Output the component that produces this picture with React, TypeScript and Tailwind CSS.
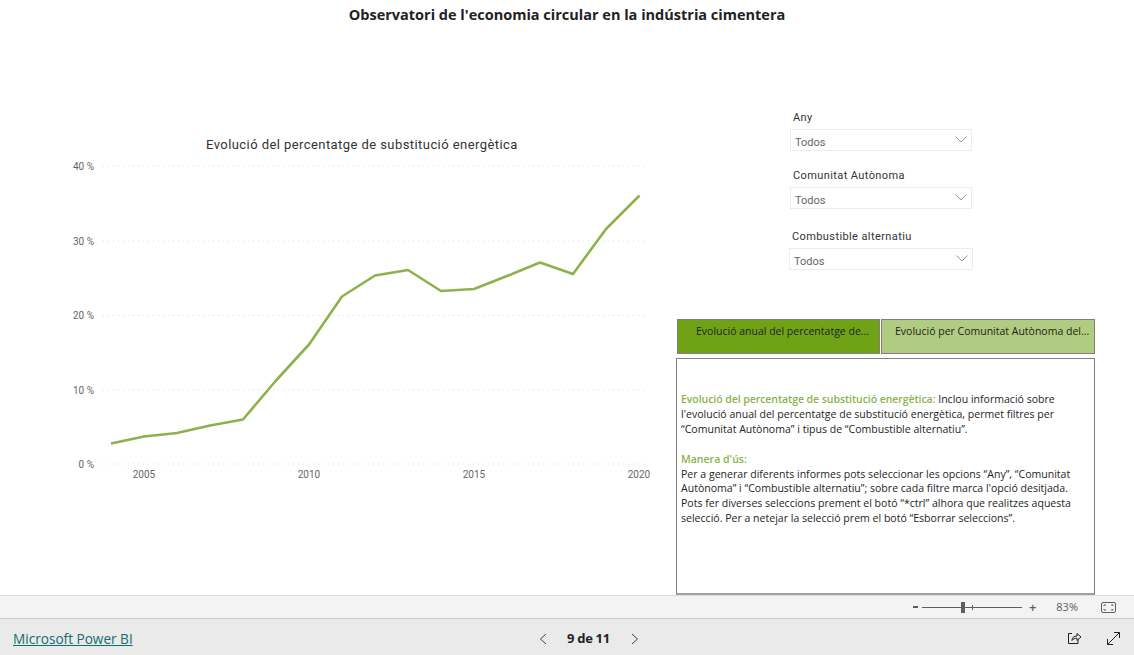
const points = '111,443.5 144,436.5 177,433 210,425.5 243,419.5 276,380.5 309,344.5 342,296.5 375,275.5 408,270 441,291 474,289 507,276 540,262.5 573,274 606,229 639.5,195.5'

function Slicer({ label, labelClass, boxClass }: { label: string; labelClass: string; boxClass: string }) {
  return (
    <div className="flex flex-col">
      <div className={`text-[11px] h-[14px] pt-[1px] leading-[14px] mb-[5px] tracking-[0.4px] text-[#333] font-['Roboto',sans-serif] ${labelClass}`}>{label}</div>
      <div className={`flex items-center justify-between h-[22px] border border-[#ececec] pt-[7px] pl-[4px] pr-[3px] text-[11px] text-[#666] font-['Roboto',sans-serif] ${boxClass}`}>
        <span>Todos</span>
        <svg width="12" height="7" viewBox="0 0 12 7" className="mr-[1px] mb-[9px]">
          <path d="M0.5 0.5 L6 6 L11.5 0.5" fill="none" stroke="#9a9a9a" strokeWidth="1" />
        </svg>
      </div>
    </div>
  )
}

function Chart() {
  const rows = [
    { y: 166, t: '40 %' },
    { y: 241, t: '30 %' },
    { y: 315.5, t: '20 %' },
    { y: 390, t: '10 %' },
    { y: 464, t: '0 %' },
  ]
  const years = [
    { x: 144, t: '2005' },
    { x: 309, t: '2010' },
    { x: 474, t: '2015' },
    { x: 639, t: '2020' },
  ]
  return (
    <svg width="676" height="340" viewBox="0 154 676 340" className="block">
      {rows.map(r => (
        <g key={r.t}>
          <line x1="103" x2="648" y1={r.y} y2={r.y} stroke="#dcdcdc" strokeWidth="1" strokeDasharray="1 4" />
          <text x="94" y={r.y + 3.5} textAnchor="end" fontSize="10" fill="#666" fontFamily="Roboto, sans-serif">{r.t}</text>
        </g>
      ))}
      {years.map(y => (
        <text key={y.t} x={y.x} y="478" textAnchor="middle" fontSize="10" fill="#666" fontFamily="Roboto, sans-serif">{y.t}</text>
      ))}
      <polyline points={points} fill="none" stroke="#8cb24d" strokeWidth="2.6" strokeLinejoin="round" />
    </svg>
  )
}

export default function App() {
  return (
    <div className="w-[1134px] h-[655px] flex flex-col bg-white overflow-hidden font-['Open_Sans',sans-serif]">
      <div className="h-[595px] shrink-0 flex flex-col">
        <h1 className="h-[31px] shrink-0 pt-[4px] text-center text-[14.5px] leading-[21px] font-bold text-[#222]">
          Observatori de l'economia circular en la indústria cimentera
        </h1>
        <div className="flex flex-1">
          <div className="w-[676px] flex flex-col pt-[105px]">
            <div className="h-[18px] pl-[206px] text-[13px] leading-[17px] tracking-[0.43px] text-[#333] font-['Roboto',sans-serif]">
              Evolució del percentatge de substitució energètica
            </div>
            <Chart />
          </div>
          <div className="flex-1 flex flex-col">
            <div className="flex flex-col pt-[79px] pl-[113px] w-[310px]">
              <Slicer label="Any" labelClass="pl-[4px]" boxClass="w-[182px] ml-[1px]" />
              <div className="h-[17px] shrink-0" />
              <Slicer label="Comunitat Autònoma" labelClass="pl-[4px]" boxClass="w-[182px] ml-[1px]" />
              <div className="h-[20px] shrink-0" />
              <Slicer label="Combustible alternatiu" labelClass="pl-[3px]" boxClass="w-[184px]" />
            </div>
            <div className="flex shrink-0 mt-[49px] ml-[1px] h-[35px] w-[418px] text-[10.5px] leading-[15px] text-[#222] whitespace-nowrap">
              <div className="w-[203px] mr-[1px] border border-[#7f7f7f] bg-[#70a216] pt-[4px] pl-[18px]">Evolució anual del percentatge de...</div>
              <div className="w-[214px] border border-[#7f7f7f] bg-[#b0cc80] pt-[4px] pl-[13px]">Evolució per Comunitat Autònoma del...</div>
            </div>
            <div className="mt-[4px] h-[237px] w-[419px] shrink-0 border border-[#7f7f7f] border-b-2 border-b-[#a0a0a0] pt-[33px] pl-[4px] text-[10.55px] leading-[14.9px] text-[#252423]">
              <p><span className="font-semibold tracking-[-0.08px] text-[#8cb24d]">Evolució del percentatge de substitució energètica:</span> Inclou informació sobre</p>
              <p>l'evolució anual del percentatge de substitució energètica, permet filtres per</p>
              <p>“Comunitat Autònoma” i tipus de “Combustible alternatiu”.</p>
              <p className="h-[14.9px]" />
              <p className="font-semibold text-[#8cb24d]">Manera d'ús:</p>
              <p>Per a generar diferents informes pots seleccionar les opcions “Any”, “Comunitat</p>
              <p>Autònoma” i “Combustible alternatiu”; sobre cada filtre marca l'opció desitjada.</p>
              <p>Pots fer diverses seleccions prement el botó “*ctrl” alhora que realitzes aquesta</p>
              <p>selecció. Per a netejar la selecció prem el botó “Esborrar seleccions”.</p>
            </div>
          </div>
        </div>
      </div>
      <div className="h-[24px] shrink-0 flex items-center justify-end bg-[#f3f3f3] border-t border-[#dcdcdc] border-b border-b-[#c8c8c8] text-[#605e5c]">
        <span className="w-[5px] h-[2px] bg-[#605e5c] mr-[4px]" />
        <div className="relative w-[100px] h-[1px] bg-[#605e5c] mr-[7px]">
          <div className="absolute left-[39px] -top-[5px] w-[4px] h-[11px] bg-[#605e5c]" />
          <div className="absolute left-[50px] -top-[2px] w-[1px] h-[5px] bg-[#605e5c]" />
        </div>
        <span className="text-[13px] font-semibold leading-none mr-[20px]">+</span>
        <span className="text-[11px] mr-[23px]">83%</span>
        <svg width="15" height="11" viewBox="0 0 15 11" className="mr-[18px]" fill="none" stroke="#605e5c">
          <rect x="0.5" y="0.5" width="14" height="10" rx="1.5" />
          <path d="M3 4V3h2M10 3h2v1M3 7v1h2M10 8h2V7" />
        </svg>
      </div>
      <div className="flex-1 relative flex items-center bg-[#eaeaea] pl-[13px] pt-[4px]">
        <a className="text-[13.6px] text-[#0f6f70] underline">Microsoft Power BI</a>
        <div className="absolute left-[539px] top-[13px] flex items-center">
          <svg width="8" height="12" viewBox="0 0 8 12" fill="none" stroke="#444"><path d="M7 1 L1.5 6 L7 11" /></svg>
          <span className="ml-[20px] mr-[21px] text-[13px] leading-[13px] font-bold text-[#252423] tracking-[-0.3px]">9 de 11</span>
          <svg width="8" height="12" viewBox="0 0 8 12" fill="none" stroke="#444"><path d="M1 1 L6.5 6 L1 11" /></svg>
        </div>
        <div className="absolute right-[14px] top-[12px] flex items-center">
          <svg width="15" height="14" viewBox="0 0 15 14" fill="none" stroke="#222" className="mr-[25px]">
            <path d="M5 2.5H1.5V12.5H11V8.5" />
            <path d="M5 9.5C5 6.5 7 5 10 5V2.5L14 6L10 9.5V7.2C8 7.2 6 7.8 5 9.5Z" />
          </svg>
          <svg width="13" height="13" viewBox="0 0 13 13" fill="none" stroke="#222">
            <path d="M0.5 12.5L12.5 0.5M7 0.5H12.5V6M0.5 7V12.5H6" />
          </svg>
        </div>
      </div>
    </div>
  )
}
